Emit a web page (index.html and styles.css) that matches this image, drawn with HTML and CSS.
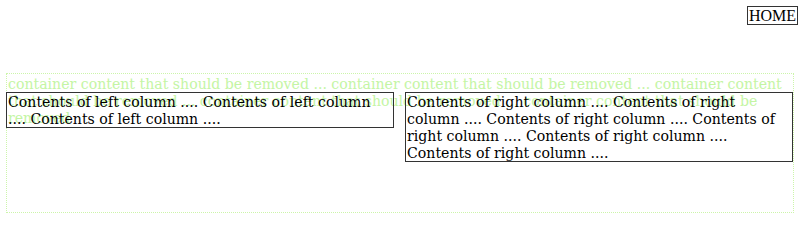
FILE: index.html
```html
<!DOCTYPE html>
<html>
<head>
<meta charset="utf-8">
<link rel="stylesheet" href="styles.css">
</head>
<body>
<div class="nav"><a class="home">HOME</a></div>
<div class="container">
  <p class="filler">container content that should be removed ... container content that should be removed ... container content that should be removed ... container content that should be removed ... container content that should be removed</p>
  <div class="columns">
    <div class="col">Contents of left column .... Contents of left column .... Contents of left column ....</div>
    <div class="col">Contents of right column .... Contents of right column .... Contents of right column .... Contents of right column .... Contents of right column .... Contents of right column ....</div>
  </div>
</div>
</body>
</html>
```
FILE: styles.css
```css
html, body {
  margin: 0;
  padding: 0;
  background: #fff;
}
body {
  font-family: "DejaVu Serif Condensed", "DejaVu Serif", serif;
  font-stretch: condensed;
  font-size: 15.7px;
  line-height: 17px;
  color: #000;
}
.nav {
  display: flex;
  justify-content: flex-end;
  align-items: flex-start;
  padding: 6px 2px 0 0;
  height: 73px;
  box-sizing: border-box;
}
.home {
  font-family: "Liberation Serif", serif;
  font-stretch: normal;
  font-size: 16px;
  line-height: 17px;
  border: 1px solid #333;
  padding: 0 1px;
}
.container {
  position: relative;
  margin-left: 6px;
  width: 788px;
  height: 140px;
  box-sizing: border-box;
  border: 1px dotted #ccf5aa;
}
.filler {
  margin: 0;
  padding: 1px 0 0 1px;
  color: #c4f5a4;
}
.columns {
  position: absolute;
  top: 18px;
  left: -1px;
  width: 788px;
  display: grid;
  grid-template-columns: 388px 388px;
  column-gap: 11px;
  align-items: start;
}
.col {
  border: 1px solid #333;
  padding: 0 1px;
}
```
